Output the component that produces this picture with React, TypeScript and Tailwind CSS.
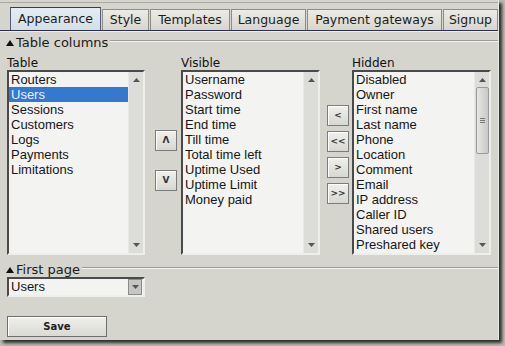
import React from 'react';

const tabs = [
  { label: 'Appearance', w: 'w-[91px]', active: true },
  { label: 'Style', w: 'w-[47px]', active: false },
  { label: 'Templates', w: 'w-[80px]', active: false },
  { label: 'Language', w: 'w-[75px]', active: false },
  { label: 'Payment gateways', w: 'w-[135px]', active: false },
  { label: 'Signup', w: 'w-[55px]', active: false },
];

const tableItems = ['Routers', 'Users', 'Sessions', 'Customers', 'Logs', 'Payments', 'Limitations'];
const visibleItems = ['Username', 'Password', 'Start time', 'End time', 'Till time', 'Total time left', 'Uptime Used', 'Uptime Limit', 'Money paid'];
const hiddenItems = ['Disabled', 'Owner', 'First name', 'Last name', 'Phone', 'Location', 'Comment', 'Email', 'IP address', 'Caller ID', 'Shared users', 'Preshared key', 'Expiration'];

const ui = { fontFamily: '"DejaVu Sans", Verdana, sans-serif' };
const arial = { fontFamily: '"Liberation Sans", Arial, sans-serif' };

function Arrow({ down }: { down?: boolean }) {
  return (
    <svg width="7" height="4" viewBox="0 0 7 4">
      <path d={down ? 'M0 0h7L3.5 4z' : 'M0 4h7L3.5 0z'} fill="#555" />
    </svg>
  );
}

function ScrollBar({ thumb }: { thumb?: boolean }) {
  return (
    <div className="w-[15px] h-full bg-[#dcdcd8] border-l border-[#e8e8e6] flex flex-col items-center pt-[6px] pb-[6px]">
      <Arrow />
      {thumb ? (
        <div className="mt-[5px] w-[13px] h-[67px] rounded-[2px] border border-[#9a9a9a] bg-gradient-to-r from-[#e6e6e4] to-[#c8c8c6] flex items-center justify-center">
          <div className="flex flex-col gap-[1px]">
            <div className="w-[5px] h-px bg-[#777]" />
            <div className="w-[5px] h-px bg-[#777]" />
            <div className="w-[5px] h-px bg-[#777]" />
          </div>
        </div>
      ) : null}
      <div className="flex-1" />
      <Arrow down />
    </div>
  );
}

function ListBox({ label, items, selected, thumb, w }: { label: string; items: string[]; selected?: string; thumb?: boolean; w: string }) {
  return (
    <div className={`${w} flex flex-col`}>
      <div className="h-[14px] text-[12px] leading-[14px] text-[#111]" style={ui}>{label}</div>
      <div className="h-[185px] border-2 border-t-[#4a4a4a] border-l-[#4a4a4a] border-b-[#eeeeea] border-r-[#eeeeea] bg-[#f3f3f1] flex overflow-hidden">
        <div className="flex-1 overflow-hidden" style={arial}>
          {items.map((it) => (
            <div
              key={it}
              className={`h-[15px] leading-[15px] text-[13px] pl-[2px] whitespace-nowrap ${it === selected ? 'bg-[#3478d0] text-[#e8f0ff]' : 'text-[#161616]'}`}
            >
              {it}
            </div>
          ))}
        </div>
        <ScrollBar thumb={thumb} />
      </div>
    </div>
  );
}

function SmallButton({ text }: { text: string }) {
  return (
    <div className="w-[22px] h-[21px] border border-[#7c7c7c] bg-gradient-to-b from-[#f0f0ec] to-[#d8d8d2] shadow-[inset_1px_1px_0_#fff] flex items-center justify-center text-[9px] font-bold text-[#333]" style={ui}>
      {text}
    </div>
  );
}

function Legend({ text }: { text: string }) {
  return (
    <div className="flex items-center h-[14px]">
      <div className="flex items-center gap-[2px] pl-[6px] pr-[2px] text-[13px] text-[#1a1a1a]" style={ui}>
        <svg width="8" height="6" viewBox="0 0 8 6"><path d="M0 6h8L4 0z" fill="#111" /></svg>
        <span>{text}</span>
      </div>
      <div className="flex-1 -mt-[5px] h-[2px] border-t border-[#9c9c96] border-b border-b-[#f4f4f0]" />
    </div>
  );
}

export default function App() {
  return (
    <div className="w-[505px] h-[346px] bg-[#bcbcb6] overflow-hidden">
      <div className="w-[499px] h-[340px] bg-[#d5d5cd] shadow-[3px_3px_3px_#2e2e2e] border-r border-[#ecece6] flex flex-col">
        <div className="h-[3px] border-b border-[#aaaaa2]" />

        {/* tabs */}
        <div className="mt-[4px] flex items-end gap-px pl-[10px] border-b border-[#2d2d4c]">
          {tabs.map((t) => (
            <div
              key={t.label}
              className={`${t.w} flex items-center justify-center text-[12.5px] text-[#1c1c1c] border border-b-0 ${
                t.active
                  ? 'h-[23px] bg-gradient-to-b from-[#e4edf3] to-[#d3dfe8] border-[#5a5a78] border-t-[#3a3a5a]'
                  : 'h-[21px] bg-gradient-to-b from-[#ecece6] to-[#d6d6ce] border-[#8e8e88]'
              }`}
              style={ui}
            >
              {t.label}
            </div>
          ))}
        </div>
        <div className="h-px bg-[#ecece8]" />

        <div className="mt-[4px]">
          <Legend text="Table columns" />
        </div>

        <div className="mt-[6px] flex pl-[7px]">
          <ListBox label="Table" items={tableItems} selected="Users" w="w-[138px]" />
          <div className="w-[22px] ml-[10px] mr-[4px] pt-[74px] flex flex-col gap-[19px]">
            <SmallButton text="Λ" />
            <SmallButton text="V" />
          </div>
          <ListBox label="Visible" items={visibleItems} w="w-[139px]" />
          <div className="w-[22px] ml-[7px] mr-[3px] pt-[49px] flex flex-col gap-[5px]">
            <SmallButton text="<" />
            <SmallButton text="<<" />
            <SmallButton text=">" />
            <SmallButton text=">>" />
          </div>
          <ListBox label="Hidden" items={hiddenItems} thumb w="w-[139px]" />
        </div>

        <div className="mt-[8px]">
          <Legend text="First page" />
        </div>

        <div className="ml-[7px] w-[138px] h-[20px] border-2 border-t-[#4a4a4a] border-l-[#4a4a4a] border-b-[#eeeeea] border-r-[#eeeeea] bg-[#f3f3f1] flex items-center">
          <div className="flex-1 pl-[2px] text-[13px] text-[#161616]" style={arial}>Users</div>
          <div className="w-[14px] h-[16px] mr-[1px] border border-[#8a8a8a] bg-[#c6c6c4] flex items-center justify-center">
            <Arrow down />
          </div>
        </div>

        <div className="ml-[7px] mt-[19px] w-[100px] h-[21px] border border-[#6e6e6e] bg-gradient-to-b from-[#f0f0ec] to-[#dadad4] shadow-[inset_1px_1px_0_#fff] flex items-center justify-center text-[10px] font-bold text-[#222]" style={ui}>
          Save
        </div>
      </div>
    </div>
  );
}
